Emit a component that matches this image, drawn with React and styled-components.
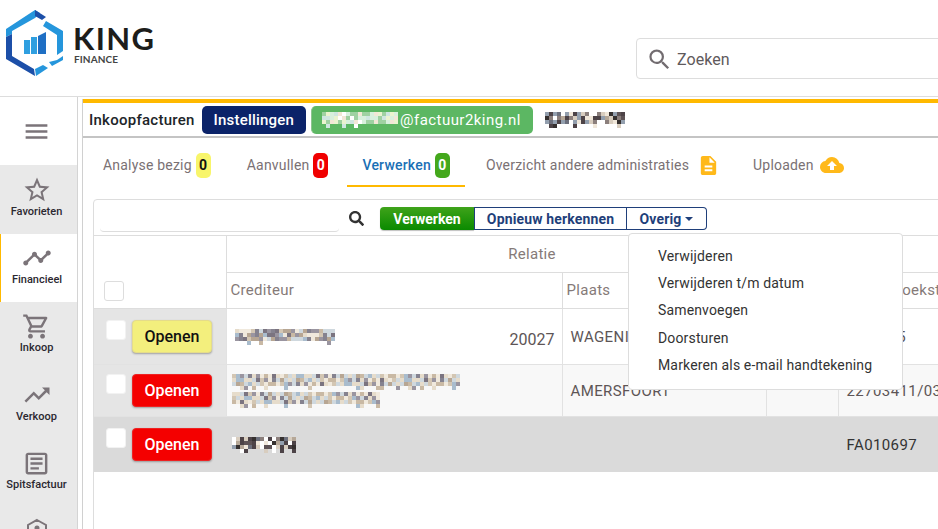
import React from 'react';
import styled, { createGlobalStyle } from 'styled-components';
import { MdMenu, MdStarBorder, MdTimeline, MdOutlineShoppingCart, MdTrendingUp, MdOutlineArticle, MdSearch, MdDescription, MdCloudUpload } from 'react-icons/md';
import { FaSearch } from 'react-icons/fa';

const Global = createGlobalStyle`
  html, body { margin: 0; padding: 0; background: #fff; }
  body { font-family: Roboto, "Liberation Sans", sans-serif; color: #212529; }
  * { box-sizing: border-box; }
`;

const Page = styled.div`
  width: 938px;
  height: 529px;
  overflow: hidden;
  display: flex;
  flex-direction: column;
`;

const Header = styled.header`
  height: 97px;
  flex: none;
  display: flex;
  border-bottom: 1px solid #ddd;
  padding: 10px 0 0 5px;
`;

const Brand = styled.div`
  display: flex;
  gap: 5px;
  height: 67px;
`;

const BrandText = styled.div`
  display: flex;
  flex-direction: column;
  padding-top: 13px;
  color: #1d1d1b;
  font-family: Lato, sans-serif;
`;

const BrandName = styled.div`
  font-size: 31px;
  line-height: 30px;
  font-weight: 700;
  letter-spacing: 1.4px;
`;

const BrandSub = styled.div`
  font-size: 10px;
  line-height: 12px;
  margin-top: 0;
  padding-left: 1px;
  font-weight: 700;
  letter-spacing: 0.1px;
  color: #444;
`;

const SearchBox = styled.div`
  margin: 28px -40px 0 auto;
  width: 342px;
  height: 41px;
  display: flex;
  align-items: center;
  gap: 4px;
  padding: 1px 0 0 9px;
  border: 1px solid #ddd;
  border-radius: 4px;
  color: #5f5a5c;
  font-size: 16px;
  letter-spacing: 0.05px;
  svg { color: #726c70; }
`;

const Body = styled.div`
  flex: 1;
  display: flex;
  min-height: 0;
`;

const Sidebar = styled.nav`
  width: 78px;
  flex: none;
  border-right: 1px solid #d4d4d4;
  background: #e9e9e9;
`;

const MenuCell = styled.div`
  height: 68px;
  padding-right: 4px;
  background: #fff;
  display: flex;
  align-items: center;
  justify-content: center;
  color: #7b7479;
`;

const SideItem = styled.div`
  height: 68.5px;
  display: flex;
  flex-direction: column;
  align-items: center;
  justify-content: ${p => (p.$top ? 'flex-start' : 'center')};
  padding: ${p => (p.$top ? '10px' : '0')} 4px ${p => (p.$top ? '0' : '6px')} 0;
  background: ${p => (p.$active ? '#fff' : 'transparent')};
  border-left: ${p => (p.$active ? '1px solid #ffb900' : 'none')};
  font-size: 11px;
  line-height: 13px;
  font-weight: 500;
  color: #2b2830;
  svg { color: #7b7479; display: block; }
`;

const Main = styled.main`
  flex: 1;
  min-width: 0;
  margin: 2px 0 0 4px;
  border-left: 1px solid #d0d0d0;
  overflow: hidden;
`;

const YellowBar = styled.div`
  height: 4px;
  background: #ffb900;
`;

const TitleRow = styled.div`
  height: 35px;
  display: flex;
  align-items: center;
  padding-left: 6px;
  border-bottom: 2px solid #c4c4c4;
`;

const Title = styled.span`
  font-size: 15px;
  font-weight: 500;
  color: #212529;
  letter-spacing: 0.26px;
  margin-right: 7px;
`;

const Pill = styled.span`
  height: 28px;
  display: inline-flex;
  align-items: center;
  border-radius: 5px;
  padding: 0 12px;
  font-size: 15px;
  font-weight: 500;
  color: #fff;
  background: ${p => p.$bg};
  letter-spacing: 0.2px;
`;

const MailPill = styled(Pill)`
  margin-left: 5px;
  padding: 0 12px 0 10px;
  border-left: 1px solid #8cc48e;
  font-weight: 400;
  letter-spacing: 0.45px;
`;

const UserName = styled.span`
  margin: 0 0 0 12px;
`;

const Mosaic = styled.svg`
  display: block;
  flex: none;
  margin-left: ${p => p.$shift || 0}px;
  margin-right: 2px;
`;

const Tabs = styled.div`
  height: 50px;
  display: flex;
  padding-left: 5px;
`;

const Tab = styled.div`
  height: 49px;
  display: flex;
  align-items: center;
  gap: ${p => p.$iconGap || 4}px;
  padding: 7px 15px 0;
  margin-right: ${p => p.$gap || 0}px;
  font-size: 14px;
  letter-spacing: 0.2px;
  color: ${p => (p.$active ? '#1a6fb5' : '#7a7174')};
  font-weight: ${p => (p.$active ? 500 : 400)};
  border-bottom: 2px solid ${p => (p.$active ? '#ffb900' : 'transparent')};
  svg { color: #ffb91a; }
`;

const Count = styled.span`
  width: 15px;
  height: 25px;
  border-radius: 5px;
  display: inline-flex;
  align-items: center;
  justify-content: center;
  font-size: 14px;
  font-weight: 700;
  background: ${p => p.$bg};
  color: ${p => p.$fg};
`;

const Card = styled.section`
  position: relative;
  margin: 11px 0 0 10px;
  width: 1000px;
  border: 1px solid #ddd;
  border-radius: 4px 0 0 0;
  height: 400px;
`;

const Toolbar = styled.div`
  height: 36px;
  display: flex;
  align-items: flex-start;
  border-bottom: 1px solid #ddd;
`;

const Filter = styled.div`
  width: 239px;
  height: 32px;
  margin-left: 6px;
  border-bottom: 1px solid #ddd;
  border-radius: 0 0 4px 4px;
`;

const SearchIcon = styled.div`
  margin: 11px 16px 0 10px;
  color: #333;
  display: flex;
`;

const BtnGroup = styled.div`
  display: flex;
  height: 23px;
  margin-top: 7px;
`;

const GreenBtn = styled.div`
  width: 94px;
  display: flex;
  align-items: center;
  justify-content: center;
  border-radius: 4px 0 0 4px;
  background: linear-gradient(#3fa31a, #0a8a00);
  color: #fff;
  font-size: 14px;
  font-weight: 700;
  box-shadow: 0 1px 1px rgba(0, 0, 0, 0.25);
`;

const OutlineBtn = styled.div`
  width: ${p => p.$w}px;
  display: flex;
  align-items: center;
  justify-content: center;
  gap: 4px;
  border: 1px solid #1f3f7a;
  border-left: ${p => (p.$join ? 'none' : '1px solid #1f3f7a')};
  border-radius: ${p => (p.$last ? '0 4px 4px 0' : '0')};
  color: #1f3f7a;
  font-size: 14px;
  font-weight: 700;
  letter-spacing: 0.15px;
`;

const Caret = styled.span`
  width: 0;
  height: 0;
  border: 4px solid transparent;
  border-top-color: #1f3f7a;
  border-bottom: none;
`;

const Table = styled.table`
  border-collapse: collapse;
  table-layout: fixed;
  width: 1000px;
  font-size: 15px;
  color: #5d5556;
`;

const Th = styled.th`
  height: ${p => p.$h}px;
  font-weight: 400;
  font-size: 15px;
  letter-spacing: 0.3px;
  text-align: ${p => (p.$center ? 'center' : 'left')};
  padding: 0 4px 0 ${p => p.$pad || 4}px;
  color: #857a78;
  border: 1px solid #ddd;
  border-top: none;
  vertical-align: middle;
`;

const BoxHead = styled.th`
  border-right: 1px solid #ddd;
  border-bottom: 1px solid #ddd;
  vertical-align: bottom;
  padding: 0 0 7px 10px;
`;

const Row = styled.tr`
  background: ${p => p.$bg};
`;

const Td = styled.td`
  height: ${p => p.$h}px;
  padding: 1px 7px 0 8px;
  border-right: 1px solid ${p => (p.$noline ? 'transparent' : '#e2e2e2')};
  border-bottom: 1px solid ${p => (p.$noline ? 'transparent' : '#e2e2e2')};
  letter-spacing: 0.4px;
  color: ${p => p.$fg || 'inherit'};
  background: ${p => p.$bg || 'transparent'};
`;

const ActionCell = styled.div`
  display: flex;
  align-items: flex-start;
  gap: 6px;
  padding: 0 0 0 4px;
`;

const CheckBox = styled.span`
  display: block;
  width: 20px;
  height: 20px;
  background: #fff;
  border-radius: 3px;
  border: 1px solid ${p => (p.$line ? '#ddd' : '#f2f2f2')};
`;

const OpenBtn = styled.span`
  width: 80px;
  height: 33px;
  display: flex;
  align-items: center;
  justify-content: center;
  border-radius: 4px;
  font-size: 16px;
  font-weight: 500;
  letter-spacing: 0;
  background: ${p => (p.$warn ? '#f3ef7d' : '#f40000')};
  color: ${p => (p.$warn ? '#111' : '#fff')};
  border: 1px solid ${p => (p.$warn ? '#e5dc8a' : '#ee2222')};
  box-shadow: 0 1px 2px rgba(0, 0, 0, 0.3);
`;

const NameCell = styled.div`
  display: flex;
  align-items: center;
  justify-content: space-between;
`;

const Number = styled.span`
  margin-top: 6px;
  font-size: 16px;
  letter-spacing: 0;
`;

const Dropdown = styled.ul`
  position: absolute;
  left: 534px;
  top: 33px;
  width: 275px;
  height: 157px;
  list-style: none;
  margin: 0;
  padding: 8px 0 0 29px;
  background: #fff;
  border: 1px solid #ddd;
  border-radius: 4px;
  z-index: 2;
`;

const DropItem = styled.li`
  height: 27.3px;
  display: flex;
  align-items: center;
  font-size: 14px;
  letter-spacing: 0.15px;
  color: #333;
`;

// pixelated (anonymised) text, blocks of 4px, 4 blocks per line
const tones = {
  light: ['#e6dccb', '#f0e9dd', '#d3c6b3', '#b7a693', '#9a95a0', '#7b7480', '#a9bccd', '#cfd8de', '#c9b9a4', '#85828f'],
  dark: ['#4d4347', '#8b7f7c', '#d8cdbf', '#6c6f7c', '#35302f', '#b5a797', '#f0e7da', '#939fae', '#ffffff', '#5e5355'],
  green: ['#f2e7d6', '#d8f0dd', '#ffffff', '#9fd1a2', '#cfe6e0', '#eaf3cf']
};

const Blur = ({ lines, seed = 7, tone = 'light', shift }) => {
  const cells = [];
  const colours = tones[tone];
  let s = seed;
  lines.forEach((width, l) => {
    const cols = Math.ceil(width / 4);
    for (let r = 0; r < 4; r++) {
      for (let c = 0; c < cols; c++) {
        s = (s * 31 + 17) % 211;
        // the bottom block row only holds descenders
        if (r === 3 && s % 4 > 0) continue;
        cells.push(<rect key={l + '-' + r + '-' + c} x={c * 4} y={l * 18 + r * 4} width="4" height="4" fill={colours[s % colours.length]} />);
      }
    }
  });
  const wide = Math.max(...lines);
  return <Mosaic $shift={shift} width={wide} height={lines.length * 18 - 2} shapeRendering="crispEdges">{cells}</Mosaic>;
};

const HexLogo = () => (
  <svg width="63" height="67" viewBox="0 0 63 67">
    <path d="M30 0 L35 3 L30 8 L7 21 L7 24 L1 27 L1 19 Z" fill="#2596dc" />
    <path d="M1 27 L7 24 L7 46 L29 59 L30 66 L1 49 Z" fill="#1c4fa8" />
    <path d="M30 0 L41 7 L37 10 L30 6 Z" fill="#1c4fa8" />
    <path d="M41 11 L58 21 L58 41 L52 45 L52 25 L38 16 Z" fill="#2596dc" />
    <path d="M58 46 L58 50 L47 56 L44 52 L52 50 Z" fill="#2596dc" />
    <path d="M30 59 L38 55 L43 58 L31 66 Z" fill="#2596dc" />
    <rect x="19" y="30" width="6" height="14" fill="#2f9fe0" />
    <rect x="26" y="27" width="6" height="17" fill="#2f9fe0" />
    <path d="M33 26 L41 22 L41 44 L33 44 Z" fill="#1f6fc4" />
  </svg>
);

const HexIcon = () => (
  <svg width="24" height="24" viewBox="0 0 24 24" fill="none" stroke="#7b7479" strokeWidth="2">
    <path d="M12 2 L21 7 V17 L12 22 L3 17 V7 Z" />
    <circle cx="12" cy="10" r="1.5" fill="#7b7479" />
  </svg>
);

const App = () => (
  <Page>
    <Global />
    <Header>
      <Brand>
        <HexLogo />
        <BrandText>
          <BrandName>KING</BrandName>
          <BrandSub>FINANCE</BrandSub>
        </BrandText>
      </Brand>
      <SearchBox><MdSearch size={27} />Zoeken</SearchBox>
    </Header>
    <Body>
      <Sidebar>
        <MenuCell><MdMenu size={29} /></MenuCell>
        <SideItem><MdStarBorder size={30} />Favorieten</SideItem>
        <SideItem $active><MdTimeline size={30} />Financieel</SideItem>
        <SideItem><MdOutlineShoppingCart size={29} />Inkoop</SideItem>
        <SideItem><MdTrendingUp size={30} />Verkoop</SideItem>
        <SideItem><MdOutlineArticle size={29} />Spitsfactuur</SideItem>
        <SideItem $top><HexIcon /></SideItem>
      </Sidebar>
      <Main>
        <YellowBar />
        <TitleRow>
          <Title>Inkoopfacturen</Title>
          <Pill $bg="#0b2369">Instellingen</Pill>
          <MailPill $bg="#5cb763"><Blur lines={[76]} seed={11} tone="green" />@factuur2king.nl</MailPill>
          <UserName><Blur lines={[80]} seed={23} tone="dark" /></UserName>
        </TitleRow>
        <Tabs>
          <Tab $gap={6}>Analyse bezig <Count $bg="#f8f56b" $fg="#111">0</Count></Tab>
          <Tab $gap={4}>Aanvullen <Count $bg="#f00000" $fg="#fff">0</Count></Tab>
          <Tab $active $gap={6}>Verwerken <Count $bg="#44a81c" $fg="#fff">0</Count></Tab>
          <Tab $gap={3} $iconGap={8}>Overzicht andere administraties <MdDescription size={23} /></Tab>
          <Tab $iconGap={6}>Uploaden <MdCloudUpload size={24} /></Tab>
        </Tabs>
        <Card>
          <Toolbar>
            <Filter />
            <SearchIcon><FaSearch size={15} /></SearchIcon>
            <BtnGroup>
              <GreenBtn>Verwerken</GreenBtn>
              <OutlineBtn $w={153}>Opnieuw herkennen</OutlineBtn>
              <OutlineBtn $w={80} $join $last>Overig <Caret /></OutlineBtn>
            </BtnGroup>
          </Toolbar>
          <Dropdown>
            <DropItem>Verwijderen</DropItem>
            <DropItem>Verwijderen t/m datum</DropItem>
            <DropItem>Samenvoegen</DropItem>
            <DropItem>Doorsturen</DropItem>
            <DropItem>Markeren als e-mail handtekening</DropItem>
          </Dropdown>
          <Table>
            <colgroup>
              <col style={{ width: 132 }} />
              <col style={{ width: 336 }} />
              <col style={{ width: 204 }} />
              <col style={{ width: 72 }} />
              <col />
            </colgroup>
            <thead>
              <tr>
                <BoxHead rowSpan={2}><CheckBox $line /></BoxHead>
                <Th $h={36} $center colSpan={3}>Relatie</Th>
                <Th $h={36} />
              </tr>
              <tr>
                <Th $h={36}>Crediteur</Th>
                <Th $h={36}>Plaats</Th>
                <Th $h={36} />
                <Th $h={36} $pad={54}>Boekstuknummer</Th>
              </tr>
            </thead>
            <tbody>
              <Row $bg="#fff">
                <Td $h={56} $bg="#e5e5e5"><ActionCell><CheckBox /><OpenBtn $warn>Openen</OpenBtn></ActionCell></Td>
                <Td $h={56}><NameCell><Blur lines={[100]} seed={3} /><Number>20027</Number></NameCell></Td>
                <Td $h={56}>WAGENINGEN</Td>
                <Td $h={56} />
                <Td $h={56}>22064/5</Td>
              </Row>
              <Row $bg="#f8f8f8">
                <Td $h={52} $bg="#e5e5e5"><ActionCell><CheckBox /><OpenBtn>Openen</OpenBtn></ActionCell></Td>
                <Td $h={52}><Blur lines={[228, 148]} seed={41} shift={-3} /></Td>
                <Td $h={52}>AMERSFOORT</Td>
                <Td $h={52} />
                <Td $h={52}>22703411/03</Td>
              </Row>
              <Row $bg="#dadada">
                <Td $h={56} $noline><ActionCell><CheckBox /><OpenBtn>Openen</OpenBtn></ActionCell></Td>
                <Td $h={56} $noline><Blur lines={[64]} seed={59} tone="dark" shift={-3} /></Td>
                <Td $h={56} $noline />
                <Td $h={56} $noline />
                <Td $h={56} $noline $fg="#333">FA010697</Td>
              </Row>
            </tbody>
          </Table>
        </Card>
      </Main>
    </Body>
  </Page>
);

export default App;
